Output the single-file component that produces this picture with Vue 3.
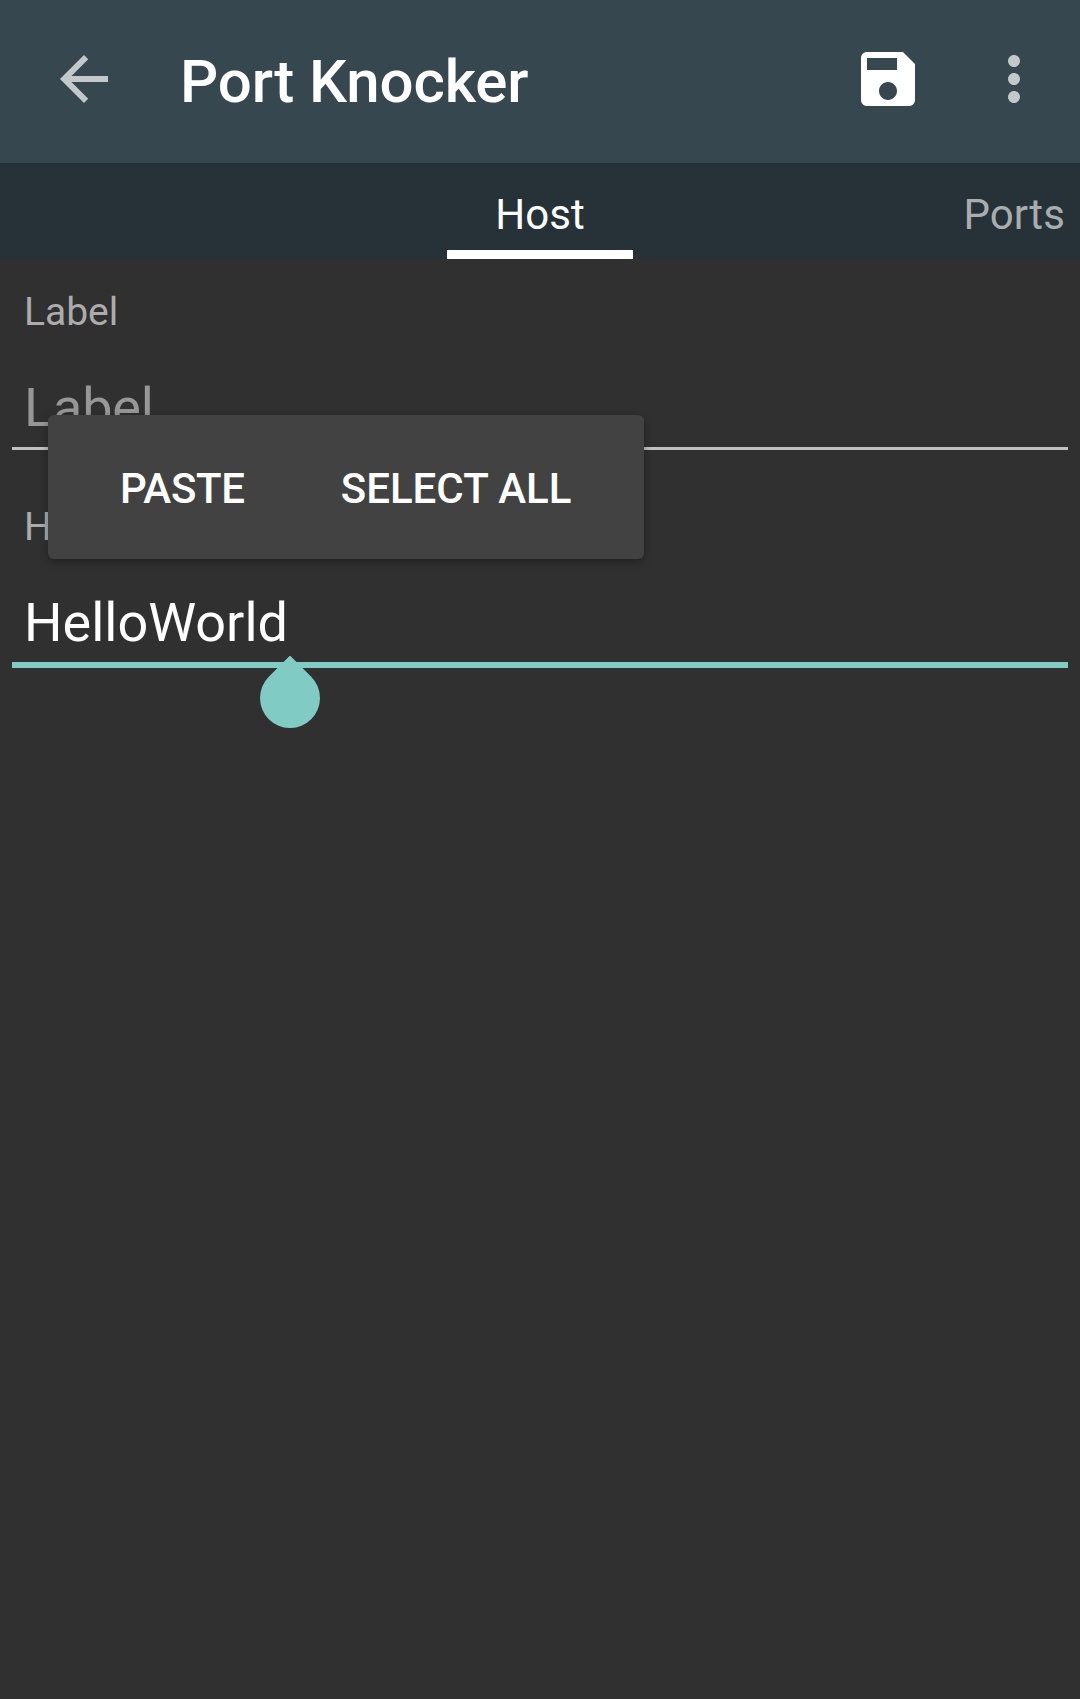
<script setup>
import { ref } from 'vue'

const label = ref('')
const host = ref('HelloWorld')
</script>

<template>
  <div class="screen">
    <header class="toolbar">
      <svg class="icon muted" viewBox="0 0 24 24"><path d="M20 11H7.83l5.59-5.59L12 4l-8 8 8 8 1.41-1.41L7.83 13H20v-2z" /></svg>
      <h1 class="title">Port Knocker</h1>
      <svg class="icon save" viewBox="0 0 24 24"><path d="M17 3H5c-1.110 0-2 .9-2 2v14c0 1.100.890 2 2 2h14c1.100 0 2-.9 2-2V7l-4-4zm-5 16c-1.660 0-3-1.340-3-3s1.340-3 3-3 3 1.340 3 3-1.340 3-3 3zm3-10H5V5h10v4z" /></svg>
      <svg class="icon muted" viewBox="0 0 24 24"><path d="M12 8c1.100 0 2-.9 2-2s-.9-2-2-2-2 .9-2 2 .9 2 2 2zm0 2c-1.100 0-2 .9-2 2s.9 2 2 2 2-.9 2-2-.9-2-2-2zm0 6c-1.100 0-2 .9-2 2s.9 2 2 2 2-.9 2-2-.9-2-2-2z" /></svg>
    </header>

    <nav class="tabs">
      <span class="tab"></span>
      <span class="tab active">Host</span>
      <span class="tab next">Ports</span>
    </nav>

    <main class="form">
      <div class="field">
        <div class="caption">Label</div>
        <div class="input" :class="{ hint: !label }">{{ label || 'Label' }}</div>
      </div>
      <div class="field">
        <div class="caption">Host</div>
        <div class="input focused">
          <span class="value">{{ host }}<svg class="handle" viewBox="0 0 60 73"><path d="M29.500 1.070h1L51.210 21.790A30 30 0 1 1 8.790 21.790Z" /></svg></span>
        </div>
      </div>
    </main>

    <div class="popup">
      <span class="paste">PASTE</span>
      <span>SELECT ALL</span>
    </div>
  </div>
</template>

<style>
body {
  background: #303030;
}
</style>

<style scoped>
.screen {
  position: relative;
  width: 1080px;
  height: 1699px;
  overflow: hidden;
  background: #303030;
  color: #fff;
  font-family: Roboto, sans-serif;
}
.toolbar {
  display: flex;
  align-items: center;
  box-sizing: border-box;
  height: 163px;
  padding: 0 30px 5px 48px;
  background: #37474f;
}
.icon {
  flex: none;
  width: 72px;
  height: 72px;
  fill: #fff;
}
.icon.muted {
  fill: #c3c8ca;
}
.icon.save {
  margin-right: 54px;
}
.title {
  flex: 1;
  margin: 0 0 0 60px;
  padding-top: 5px;
  font-size: 60px;
  line-height: 71px;
  font-weight: 500;
  letter-spacing: -0.12px;
}
.tabs {
  display: grid;
  grid-template-columns: 1fr 186px 1fr;
  height: 96px;
  background: #263238;
  font-size: 42px;
  line-height: 50px;
}
.tab {
  box-sizing: border-box;
  padding-top: 27px;
}
.next {
  padding-right: 15px;
  text-align: right;
  letter-spacing: 0.15px;
  color: #a8adaf;
}
.active {
  text-align: center;
  border-bottom: 9px solid #fff;
}
.form {
  padding: 30px 12px 0;
}
.field {
  height: 215px;
}
.caption {
  padding-left: 12px;
  font-size: 39px;
  line-height: 46px;
  color: #acacac;
}
.input {
  box-sizing: border-box;
  height: 115px;
  padding: 41px 12px 0;
  font-size: 54px;
  line-height: 64px;
  border-bottom: 3px solid #c1c1c1;
}
.input.hint {
  color: #979797;
  letter-spacing: -0.15px;
}
.input.focused {
  height: 118px;
  border-bottom: 6px solid #80cbc4;
}
.value {
  position: relative;
}
.handle {
  position: absolute;
  top: 64px;
  right: -32px;
  width: 60px;
  height: 73px;
  fill: #80cbc4;
}
.popup {
  position: absolute;
  left: 48px;
  top: 415px;
  display: flex;
  align-items: center;
  gap: 96px;
  box-sizing: border-box;
  width: 596px;
  height: 144px;
  padding: 3px 0 0 72px;
  border-radius: 6px;
  background: #424242;
  box-shadow: 0 3px 8px rgba(0, 0, 0, 0.32);
  font-size: 42px;
  line-height: 50px;
  font-weight: 500;
  white-space: nowrap;
}
.paste {
  letter-spacing: -0.3px;
}
</style>
